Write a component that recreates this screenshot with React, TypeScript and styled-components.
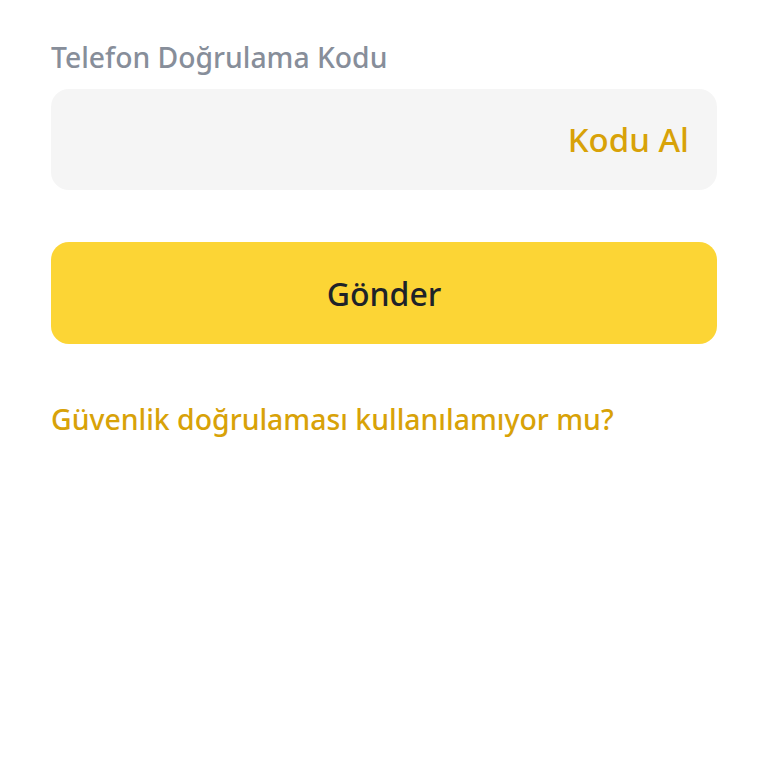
import styled, { createGlobalStyle } from "styled-components";

const GlobalStyle = createGlobalStyle`
  html, body {
    margin: 0;
    padding: 0;
    background: #ffffff;
  }
  body {
    font-family: "Noto Sans", "Open Sans", sans-serif;
  }
`;

export default function App() {
  return (
    <>
      <GlobalStyle />
      <Page>
        <Label>Telefon Doğrulama Kodu</Label>
        <InputBox>
          <CodeInput type="text" />
          <GetCode>Kodu Al</GetCode>
        </InputBox>
        <SubmitButton>Gönder</SubmitButton>
        <HelpLink>Güvenlik doğrulaması kullanılamıyor mu?</HelpLink>
      </Page>
    </>
  );
}

const Page = styled.div`
  display: flex;
  flex-direction: column;
  padding: 38px 51px 0;
`;

const Label = styled.div`
  font-size: 28.3px;
  font-weight: 500;
  color: #878e9a;
  line-height: 38px;
`;

const InputBox = styled.div`
  margin-top: 13px;
  height: 101px;
  display: flex;
  align-items: center;
  background: #f5f5f5;
  border-radius: 18px;
  padding: 0 28px;
  box-sizing: border-box;
`;

const CodeInput = styled.input`
  flex: 1;
  min-width: 0;
  border: none;
  outline: none;
  background: transparent;
  font-size: 28px;
  font-family: inherit;
`;

const GetCode = styled.span`
  font-size: 33px;
  font-weight: 500;
  color: #d8a208;
`;

const SubmitButton = styled.button`
  margin-top: 52px;
  height: 102px;
  border: none;
  border-radius: 18px;
  background: #fcd535;
  color: #1e2329;
  font-family: inherit;
  font-size: 32px;
  font-weight: 500;
  cursor: pointer;
`;

const HelpLink = styled.a`
  margin-top: 56px;
  font-size: 28.4px;
  font-weight: 500;
  color: #d8a208;
  line-height: 38px;
  cursor: pointer;
`;
